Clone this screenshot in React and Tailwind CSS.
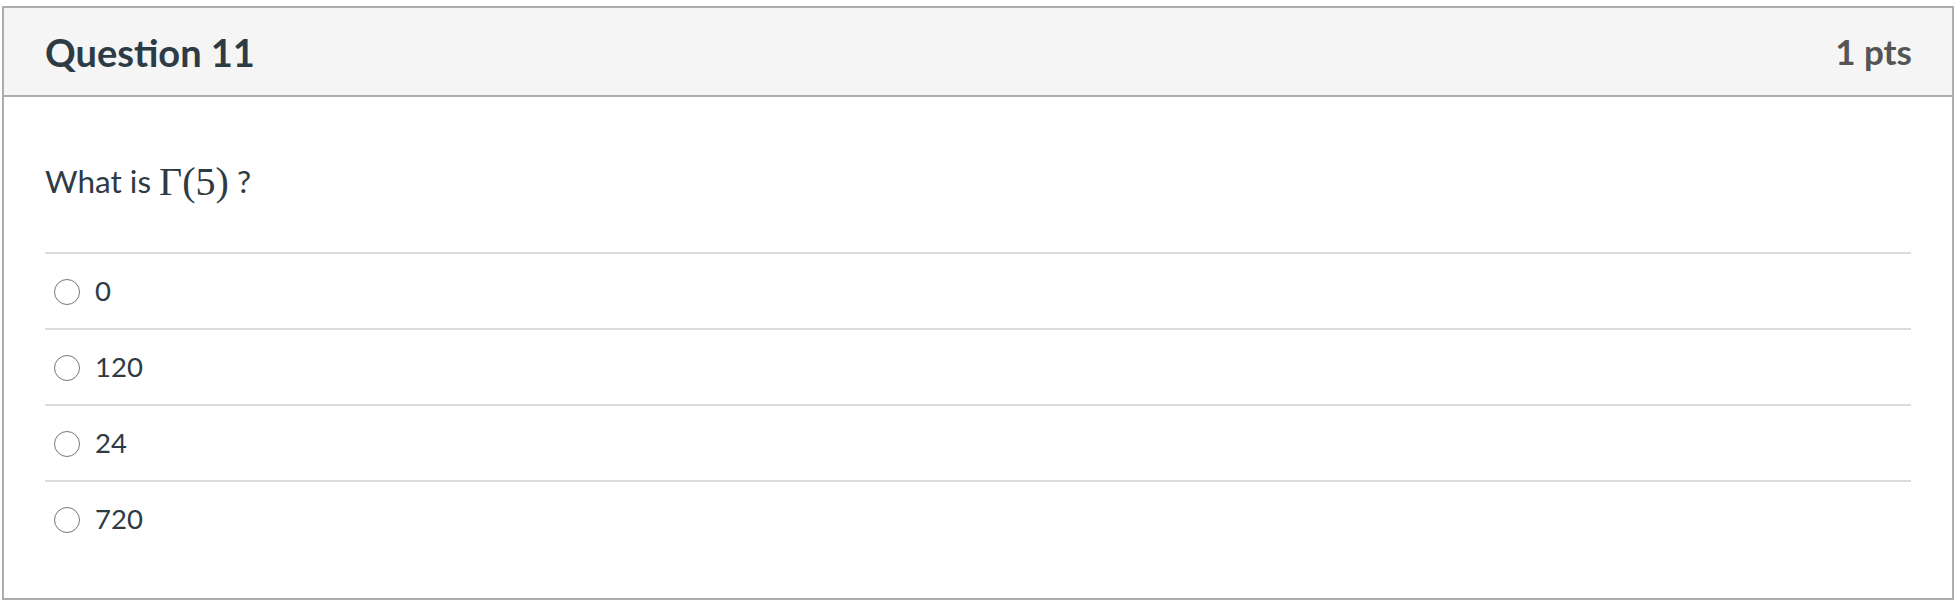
export default function App() {
  const options = ["0", "120", "24", "720"];
  return (
    <div className="w-[1954px] h-[606px] bg-white pt-[6px] pl-[2px]" style={{ fontFamily: "Lato, 'Noto Sans', sans-serif" }}>
      <div className="w-[1952px] border-2 border-[#adadad] bg-white">
        <div className="h-[89px] bg-[#f5f5f5] border-b-2 border-[#adadad] flex items-center justify-between pl-[41px] pr-[40px]">
          <div className="text-[38px] font-bold text-[#2d3b45] leading-none">Question 11</div>
          <div className="text-[35px] font-bold text-[#555555] leading-none">1 pts</div>
        </div>
        <div className="px-[41px] pb-[42px]">
          <div className="pt-[62px] pb-[48px] text-[31.5px] leading-[45px] text-[#2d3b45] flex items-center">
            <span>What is&nbsp;</span>
            <span className="text-[40px] text-[#2d3b45] leading-[45px]" style={{ fontFamily: "'Liberation Serif', 'DejaVu Serif', serif" }}>Γ(5)</span>
            <span>&nbsp;?</span>
          </div>
          {options.map((o) => (
            <div key={o} className="border-t-2 border-[#dcdcdc] h-[76px] flex items-center pl-[9px] gap-[15px]">
              <div className="w-[26px] h-[26px] rounded-full border-[1.5px] border-[#767676] bg-white mt-[2px]" />
              <div className="text-[27.5px] text-[#2d3b45] leading-none">{o}</div>
            </div>
          ))}
        </div>
      </div>
    </div>
  );
}
